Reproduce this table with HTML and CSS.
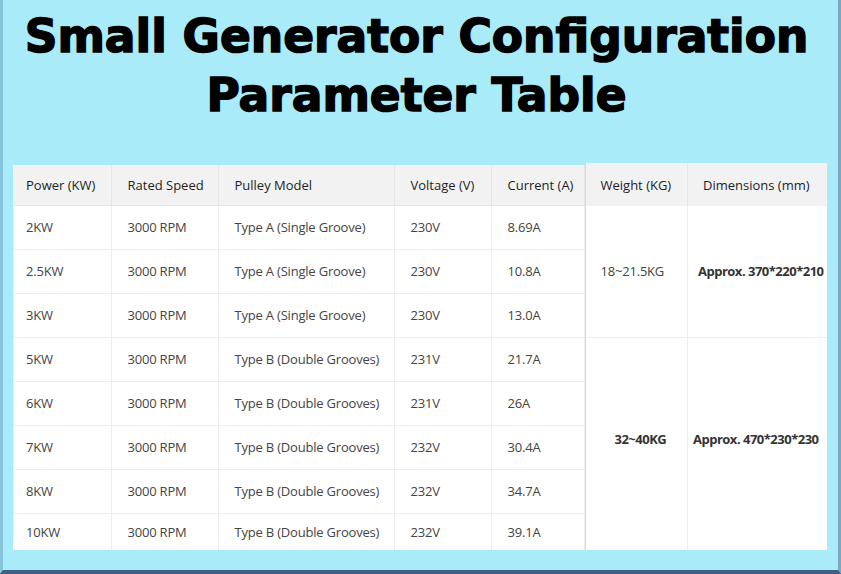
FILE: index.html
```html
<!DOCTYPE html>
<html>
<head>
<meta charset="utf-8">
<link rel="stylesheet" href="styles.css">
</head>
<body>
<div class="frame">
  <h1 class="title">Small Generator Configuration<br>Parameter Table</h1>
  <div class="tables">
    <table class="specs">
      <thead>
        <tr>
          <th class="c1">Power (KW)</th>
          <th class="c2">Rated Speed</th>
          <th class="c3">Pulley Model</th>
          <th class="c4">Voltage (V)</th>
          <th class="c5">Current (A)</th>
        </tr>
      </thead>
      <tbody>
        <tr><td>2KW</td><td>3000 RPM</td><td>Type A (Single Groove)</td><td>230V</td><td>8.69A</td></tr>
        <tr><td>2.5KW</td><td>3000 RPM</td><td>Type A (Single Groove)</td><td>230V</td><td>10.8A</td></tr>
        <tr><td>3KW</td><td>3000 RPM</td><td>Type A (Single Groove)</td><td>230V</td><td>13.0A</td></tr>
        <tr><td>5KW</td><td>3000 RPM</td><td>Type B (Double Grooves)</td><td>231V</td><td>21.7A</td></tr>
        <tr><td>6KW</td><td>3000 RPM</td><td>Type B (Double Grooves)</td><td>231V</td><td>26A</td></tr>
        <tr><td>7KW</td><td>3000 RPM</td><td>Type B (Double Grooves)</td><td>232V</td><td>30.4A</td></tr>
        <tr><td>8KW</td><td>3000 RPM</td><td>Type B (Double Grooves)</td><td>232V</td><td>34.7A</td></tr>
        <tr class="last"><td>10KW</td><td>3000 RPM</td><td>Type B (Double Grooves)</td><td>232V</td><td>39.1A</td></tr>
      </tbody>
    </table>
    <table class="extra">
      <thead>
        <tr>
          <th class="w">Weight (KG)</th>
          <th class="d">Dimensions (mm)</th>
        </tr>
      </thead>
      <tbody>
        <tr class="g1"><td class="w">18~21.5KG</td><td class="d bold d1">Approx. 370*220*210</td></tr>
        <tr class="g2"><td class="w bold w2">32~40KG</td><td class="d bold d2">Approx. 470*230*230</td></tr>
      </tbody>
    </table>
  </div>
</div>
</body>
</html>
```

FILE: styles.css
```css
* { box-sizing: border-box; }
html, body {
  margin: 0;
  padding: 0;
  width: 841px;
  height: 574px;
  overflow: hidden;
  background: #a9ebf9;
}
.frame {
  width: 841px;
  height: 574px;
  border-left: 3px solid #86c4da;
  border-right: 3px solid #7ea6c0;
  border-bottom: 4px solid #3f5f86;
  background: #a9ebf9;
  padding: 0 0 0 10px;
}
.title {
  margin: 0;
  padding-top: 7px;
  padding-right: 18px;
  height: 163px;
  text-align: center;
  font-family: "DejaVu Sans", sans-serif;
  font-weight: bold;
  font-size: 45.5px;
  line-height: 59px;
  color: #000;
  -webkit-text-stroke: 1.5px #000;
}
.tables {
  display: flex;
  align-items: flex-start;
}
table {
  border-collapse: collapse;
  font-family: "Open Sans", "Noto Sans", sans-serif;
  font-size: 13px;
  letter-spacing: -0.2px;
  background: #fff;
  white-space: nowrap;
}
th {
  background: #f2f2f2;
  color: #1e1e1e;
  font-weight: normal;
  text-align: left;
  letter-spacing: 0;
}
td { color: #444; }
.specs { margin-top: 2px; }
.specs th {
  height: 40px;
  padding: 0 0 0 16px;
  border-right: 1px solid #e6e6e6;
  border-bottom: 1px solid #e6e6e6;
}
.specs td {
  height: 44px;
  padding: 0 0 0 16px;
  border-right: 1px solid #eeeeee;
  border-bottom: 1px solid #eeeeee;
}
.specs tr.last td { height: 37px; border-bottom: none; }
.specs th:first-child, .specs td:first-child { padding-left: 13px; }
.c1 { width: 98px; }
.c2 { width: 107px; }
.c3 { width: 176px; }
.c4 { width: 97px; }
.c5 { width: 93px; }
.extra {
  margin-left: 1px;
  table-layout: fixed;
  width: 241px;
}
.extra th {
  height: 43px;
  padding: 0 0 0 15px;
  border-right: 1px solid #e6e6e6;
}
.extra th.d, .extra td.d { border-right: none; }
.extra td {
  padding: 0 0 0 15px;
  border-right: 1px solid #eeeeee;
}
.extra th.w { width: 102px; }
.extra th.d { width: 139px; }
.g1 td { height: 131px; border-bottom: 1px solid #eeeeee; }
.g2 td { height: 213px; padding-bottom: 10px; }
.extra td.bold { font-weight: bold; color: #333; letter-spacing: -0.5px; font-size: 13px; }
.extra td.w2 { padding-left: 29px; }
.extra td.d1 { padding-left: 10px; }
.extra td.d2 { padding-left: 5px; }
```
